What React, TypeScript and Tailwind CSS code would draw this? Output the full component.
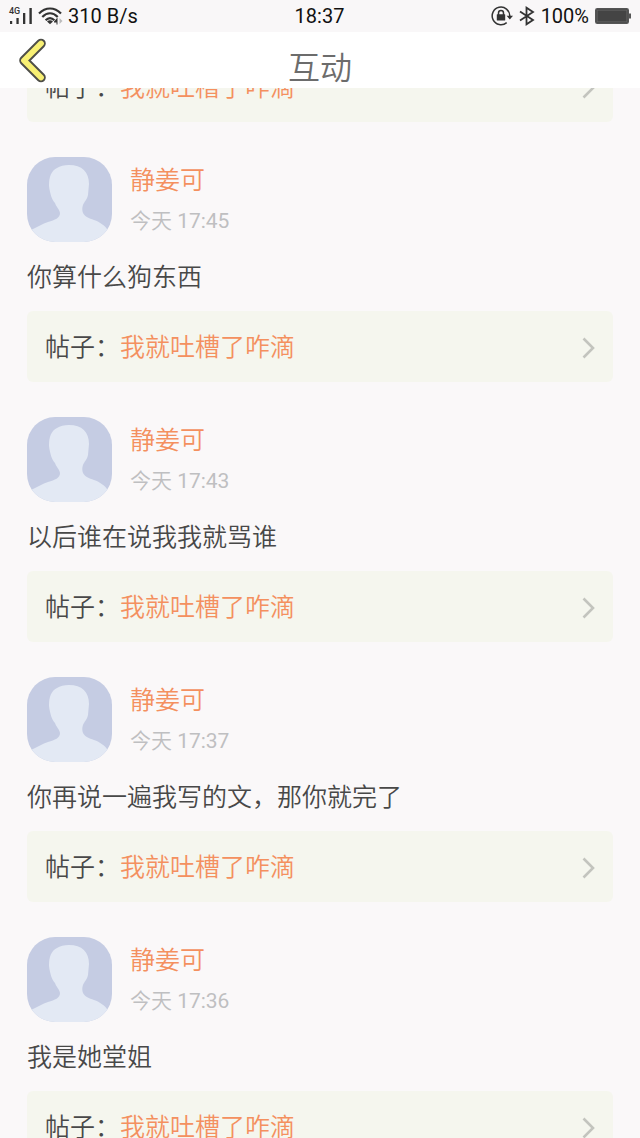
type Comment = {
  name: string;
  time: string;
  text: string;
};

const post = "我就吐槽了咋滴";

const comments: Comment[] = [
  { name: "静姜可", time: "17:45", text: "你算什么狗东西" },
  { name: "静姜可", time: "17:43", text: "以后谁在说我我就骂谁" },
  { name: "静姜可", time: "17:37", text: "你再说一遍我写的文，那你就完了" },
  { name: "静姜可", time: "17:36", text: "我是她堂姐" },
];

function SignalIcon() {
  return (
    <svg viewBox="0 0 24 20" className="h-5 w-6" fill="#333">
      <text x="1" y="8" className="text-[9px] font-medium">
        4G
      </text>
      <rect x="2" y="15" width="2.2" height="3" />
      <rect x="8.4" y="12" width="2.3" height="6" />
      <rect x="15" y="7" width="2.3" height="11" />
      <rect x="21.4" y="2" width="2.4" height="16" />
    </svg>
  );
}

function WifiIcon() {
  return (
    <svg viewBox="0 0 26 20" className="h-5 w-[26px]" fill="none" stroke="#333" strokeWidth="2.2">
      <path d="M1 7.5C7.5.8 16.5.8 23 7.5" />
      <path d="M4.3 11C9.2 6 14.8 6 19.7 11" />
      <path d="M7.6 14.3C10.5 11.3 13.5 11.3 16.4 14.3" />
      <path d="M9 15.5Q12 13.2 15 15.5L12 18.3Z" fill="#333" stroke="none" />
      <path d="M16 15.5L19.5 11.5V18.5H18.5V16.5H16Z" fill="#333" stroke="none" />
      <path d="M21.5 12V18L24.5 15Z" fill="#bbb" stroke="none" />
    </svg>
  );
}

function RotationLockIcon() {
  return (
    <svg viewBox="0 0 22 20" className="h-5 w-[22px]" fill="none" stroke="#333">
      <path d="M15.7 16.6A8.8 8.8 0 1 1 18.8 10" strokeWidth="1.5" />
      <path d="M15.6 9.8H22L18.8 13.6Z" fill="#333" stroke="none" />
      <rect x="5.8" y="8.2" width="8.4" height="6.4" rx="0.6" fill="#333" stroke="none" />
      <path d="M7.5 9V7a2.5 2.5 0 0 1 5 0V9" strokeWidth="1.5" />
    </svg>
  );
}

function BluetoothIcon() {
  return (
    <svg viewBox="0 0 16 20" className="h-5 w-4" fill="none" stroke="#333" strokeWidth="1.8">
      <path d="M1 5.5L14 14L7.5 18.3V1.7L14 6L1 14.5" />
    </svg>
  );
}

function BatteryIcon() {
  return (
    <svg viewBox="0 0 36 18" className="h-[18px] w-9">
      <rect x="0.8" y="1.8" width="32.4" height="14.4" rx="1.5" fill="#444" stroke="#555" strokeWidth="1.6" />
      <rect x="2.2" y="3.2" width="29.6" height="11.6" fill="none" stroke="#666" strokeWidth="0.7" />
      <rect x="34" y="6.5" width="2" height="5" fill="#555" />
    </svg>
  );
}

function StatusBar() {
  return (
    <div className="grid h-8 shrink-0 grid-cols-[1fr_auto_1fr] items-center bg-[#f9f7f8] pr-[9px] pl-2 text-xl text-[#111]">
      <div className="flex items-center">
        <SignalIcon />
        <span className="ml-1.5">
          <WifiIcon />
        </span>
        <span className="ml-1">310 B/s</span>
      </div>
      <span>18:37</span>
      <div className="flex items-center justify-end gap-1.5">
        <RotationLockIcon />
        <BluetoothIcon />
        <span>100%</span>
        <BatteryIcon />
      </div>
    </div>
  );
}

function Header() {
  return (
    <header className="grid h-14 shrink-0 grid-cols-[1fr_auto_1fr] items-center bg-white">
      <button type="button" aria-label="返回" className="ml-[18px] w-7 cursor-pointer">
        <svg viewBox="0 0 28 46" className="h-[46px] w-7" fill="none" strokeLinecap="round" strokeLinejoin="round">
          <path d="M23 6.5L6 23.5L23 40.5" stroke="#4e4e48" strokeWidth="9.6" />
          <path d="M23 6.5L6 23.5L23 40.5" stroke="#f8f074" strokeWidth="5.8" />
        </svg>
      </button>
      <h1 className="pt-4 text-[32px] leading-10 font-[350] text-[#6c6c6c]">互动</h1>
    </header>
  );
}

function Avatar() {
  return (
    <svg viewBox="0 0 85 85" className="size-[85px] shrink-0 rounded-[28px] bg-[#c5cce3]">
      <path
        d="M42 8C55 8 62 15 62 27L61 38C60 43 57 45 56 48C55 51 55 53 56 56C58 60 62 61 67 63C73 65 78 69 80 72L85 76V85H0V77C2 74 4 73 6 72C12 69 15 67 21 65C28 63 33 61 33 56C32 51 29 50 28 46C25 43 23 37 22 29C22 20 24 14 30 11C33 9 37 8 42 8Z"
        fill="#e3e9f4"
      />
    </svg>
  );
}

function PostLink() {
  return (
    <a href="#post" className="flex h-[71px] items-center rounded-md bg-[#f5f6ee] px-[18px] pt-0.5">
      <span className="text-[#484848]">帖子：</span>
      <span className="grow text-[#f4905f]">{post}</span>
      <svg viewBox="0 0 13 22" className="h-[22px] w-[13px]" fill="none" stroke="#c3c4be" strokeWidth="2.6">
        <path d="M1.5 1.5L11 11L1.5 20.5" />
      </svg>
    </a>
  );
}

function CommentItem({ comment }: { comment: Comment }) {
  return (
    <li>
      <div className="flex gap-[18px]">
        <Avatar />
        <div className="pt-1.5">
          <p className="leading-9 text-[#f4905f]">{comment.name}</p>
          <p className="mt-1.5 text-[21px] leading-8 text-[#bfbfc1]">
            今天 <time className="font-normal">{comment.time}</time>
          </p>
        </div>
      </div>
      <p className="mt-[18px] mb-[15px] leading-9 text-[#484848]">{comment.text}</p>
      <PostLink />
    </li>
  );
}

export default function App() {
  return (
    <div className="flex h-screen flex-col overflow-hidden bg-[#faf8f9] font-[Roboto,'Noto_Sans_CJK_SC',sans-serif]">
      <StatusBar />
      <Header />
      <main className="min-h-0 grow overflow-y-auto px-[27px] text-[25px] font-[350] [scrollbar-width:none]">
        <ul className="-mt-[37px] flex flex-col gap-[35px]">
          <li>
            <PostLink />
          </li>
          {comments.map((comment) => (
            <CommentItem key={comment.time} comment={comment} />
          ))}
        </ul>
      </main>
    </div>
  );
}
